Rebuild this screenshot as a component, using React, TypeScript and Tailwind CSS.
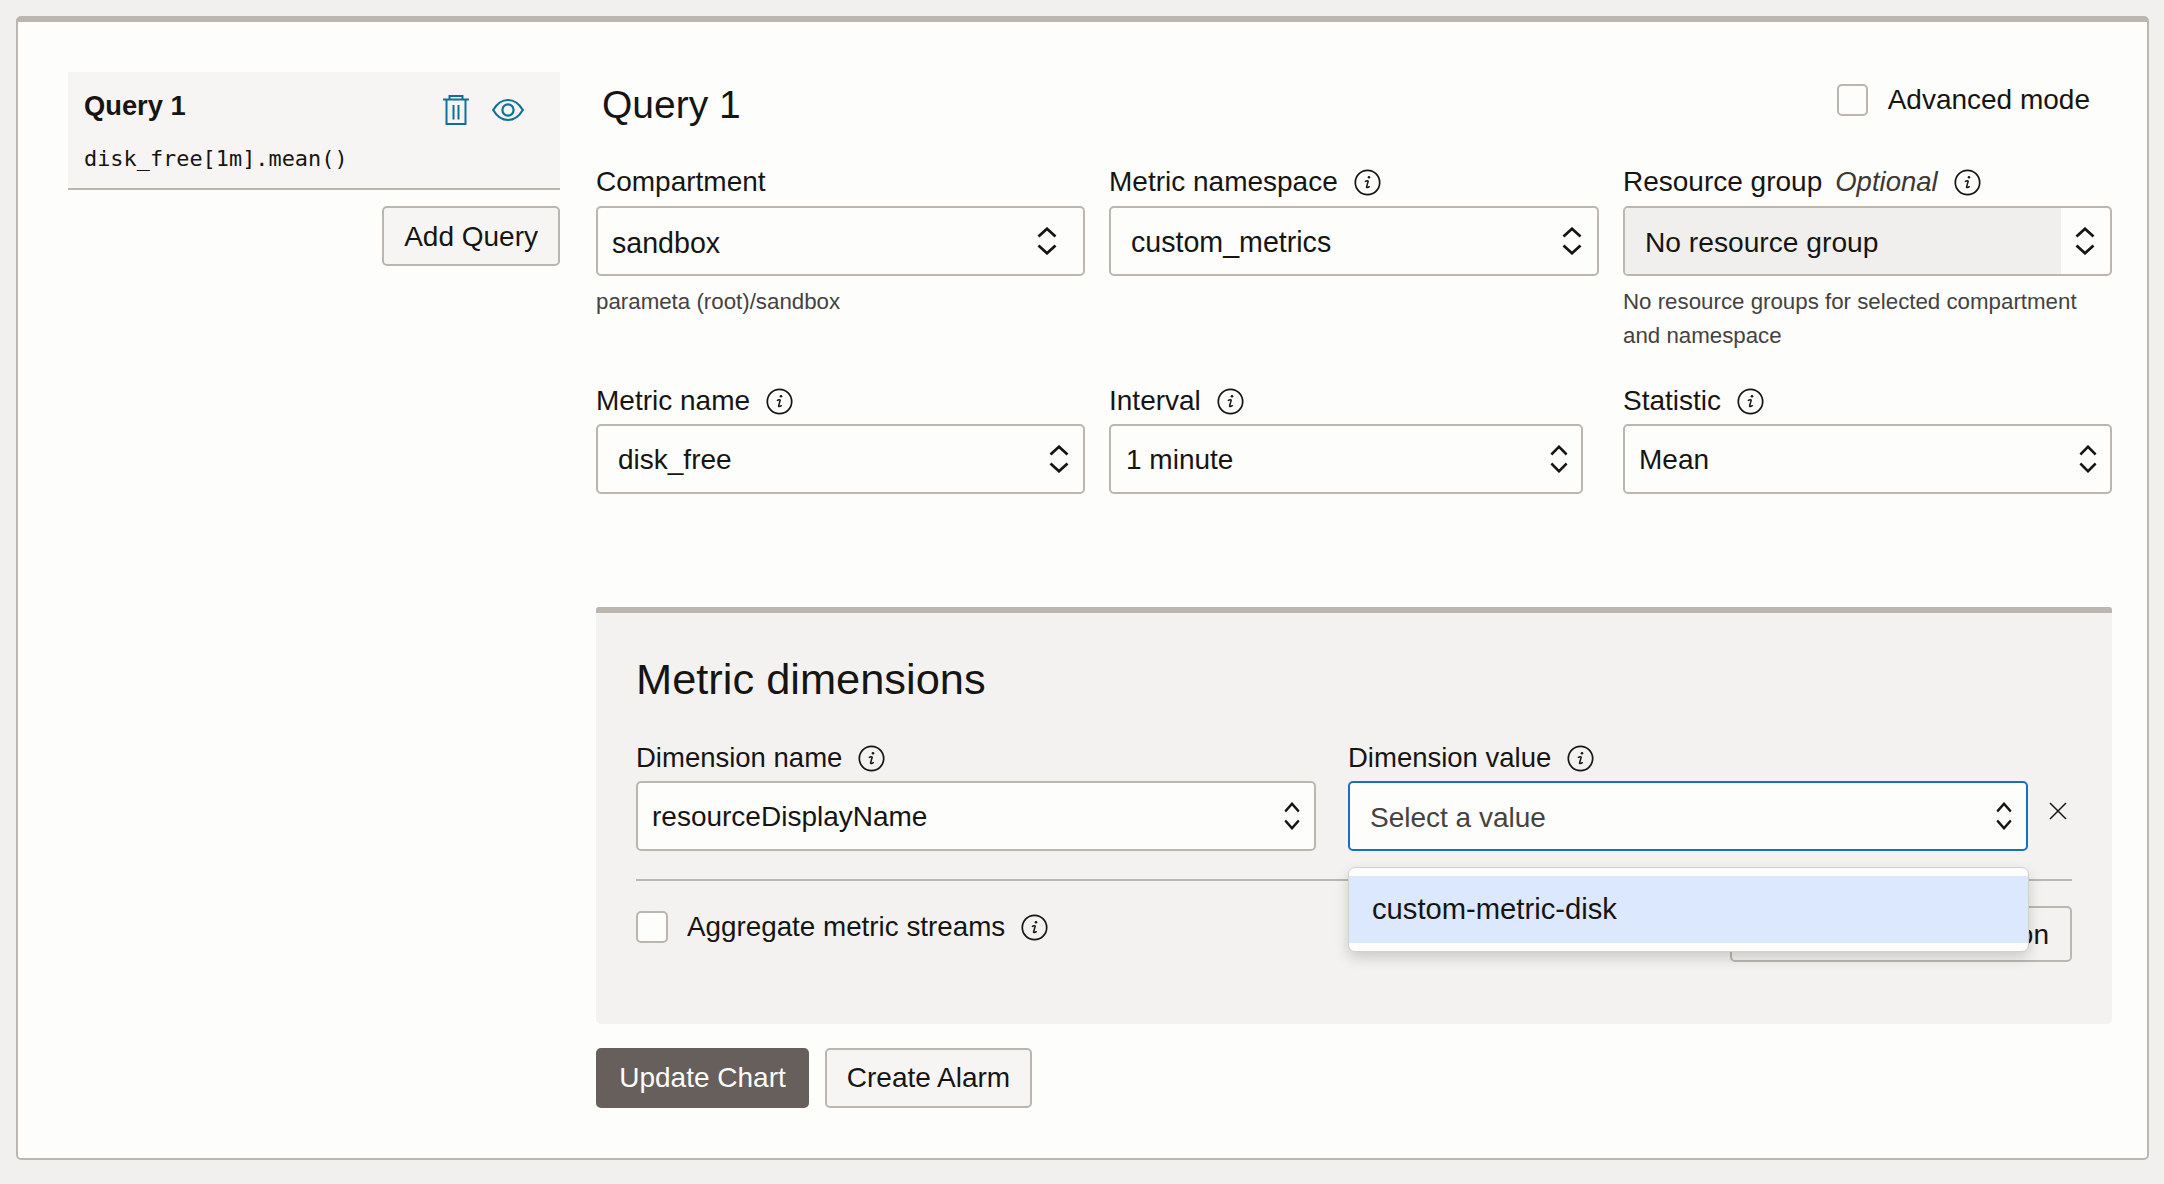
import React from "react"

function InfoIcon() {
    return (
        <svg width="27" height="27" viewBox="0 0 27 27" fill="none" className="shrink-0">
            <circle cx="13.5" cy="13.5" r="12.2" stroke="#161513" strokeWidth="1.7" />
            <circle cx="15" cy="8.2" r="1.3" fill="#161513" />
            <path d="M11.4 12.4c1.200-.8 2.800-1 2.800 0l-1.600 5.300c-.3 1.100 1.100 1.300 2.700 0" stroke="#161513" strokeWidth="1.5" strokeLinecap="round" strokeLinejoin="round" />
        </svg>
    )
}

function Chevrons({ w = 20 }: { w?: number }) {
    return (
        <svg width={w} height="28" viewBox="0 0 20 28" preserveAspectRatio="none" fill="none" className="shrink-0">
            <path d="M1.5 9.5 10 1.8l8.5 7.7" stroke="#161513" strokeWidth="2.8" />
            <path d="M1.5 18.5 10 26.2l8.5-7.7" stroke="#161513" strokeWidth="2.8" />
        </svg>
    )
}

function TrashIcon() {
    return (
        <svg width="26" height="30" viewBox="0 0 26 30" fill="none" className="shrink-0">
            <path d="M0 4.500h26M6.500 4.500V1h13v3.500M3.500 4.500v24.500h19V4.500M10.500 10v14.500M15.500 10v14.500" stroke="#0e7195" strokeWidth="2" />
        </svg>
    )
}

function EyeIcon() {
    return (
        <svg width="32" height="24" viewBox="0 0 32 24" fill="none" className="shrink-0">
            <path d="M1.200 12C5 5.500 10 2 16 2s11 3.500 14.800 10C27 18.500 22 22 16 22S5 18.500 1.200 12Z" stroke="#0e7195" strokeWidth="2.200" />
            <circle cx="16" cy="12" r="5.600" stroke="#0e7195" strokeWidth="2.200" />
        </svg>
    )
}

function CloseIcon() {
    return (
        <svg width="18" height="18" viewBox="0 0 18 18" fill="none" className="shrink-0">
            <path d="M1 1l16 16M17 1 1 17" stroke="#161513" strokeWidth="1.500" />
        </svg>
    )
}

function Checkbox({ className = "" }: { className?: string }) {
    return <div className={`rounded-[5px] border-2 border-[#bcb6b1] bg-[#fdfdfb] shrink-0 ${className}`} />
}

function Label({ text, optional, noInfo, small }: { text: string, optional?: boolean, noInfo?: boolean, small?: boolean }) {
    return (
        <div className={`flex items-center h-[36px] mb-[5px] text-[#161513] ${small ? "text-[27.5px]" : "text-[28px]"}`}>
            <span>{text}</span>
            {optional && <span className="ml-[13px] italic text-[#3b3835] text-[27.5px]">Optional</span>}
            {!noInfo && <span className="ml-[16px]"><InfoIcon /></span>}
        </div>
    )
}

function Select({ value, padLeft, chevronRight, grey, placeholder, focused, chevronW, width, textSize }: {
    value: string, padLeft: string, chevronRight: string, grey?: boolean,
    placeholder?: boolean, focused?: boolean, chevronW?: number, width?: string, textSize?: string
}) {
    return (
        <div className={`flex items-center h-[70px] rounded-[5px] border-2 bg-[#fdfdfb] overflow-hidden ${textSize ?? "text-[28px]"} ${focused ? "border-[#1a6dc4]" : "border-[#bcb6b1]"} ${width ?? "w-full"}`}>
            <div className={`flex-1 flex items-center h-full ${padLeft} ${grey ? "bg-[#f0efed]" : ""} ${placeholder ? "text-[#45423f]" : "text-[#161513]"}`}>
                {value}
            </div>
            <div className={`flex items-center justify-center h-full ${chevronRight}`}>
                <Chevrons w={chevronW} />
            </div>
        </div>
    )
}

function Helper({ children }: { children: React.ReactNode }) {
    return <p className="mt-[9px] text-[22.3px] leading-[34px] text-[#45423f]">{children}</p>
}

export default function App() {
    return (
        <div className="min-h-screen h-[1184px] overflow-hidden bg-[#f1f0ee] pt-[16px] pl-[16px] font-['Liberation_Sans',Arial,sans-serif]">
            <div className="flex w-[2133px] h-[1144px] rounded-[5px] border-x-2 border-b-2 border-t-[6px] border-[#bcb6b1] bg-[#fdfdfb] pl-[50px] pr-[35px] pt-[50px]">

                <div className="w-[492px] shrink-0">
                    <div className="h-[118px] bg-[#f6f5f4] border-b-2 border-[#bcb6b1] pl-[16px] pr-[36px]">
                        <div className="flex items-center justify-between h-[64px] pt-[5px]">
                            <span className="text-[27.3px] font-bold text-[#161513]">Query 1</span>
                            <div className="flex items-center gap-[23px] pt-[6px]">
                                <TrashIcon />
                                <EyeIcon />
                            </div>
                        </div>
                        <div className="font-['DejaVu_Sans_Mono',monospace] text-[21.9px] leading-[30px] mt-[8px] text-[#161513]">disk_free[1m].mean()</div>
                    </div>
                    <div className="flex justify-end mt-[16px]">
                        <button className="h-[60px] px-[20px] pt-[2px] rounded-[5px] border-2 border-[#bcb6b1] bg-[#f6f5f4] text-[28px] text-[#161513]">Add Query</button>
                    </div>
                </div>

                <div className="w-[1516px] ml-[36px]">
                    <div className="flex items-start justify-between h-[92px]">
                        <h1 className="pl-[6px] text-[39px] leading-[66px] text-[#161513]">Query 1</h1>
                        <div className="flex items-center gap-[20px] pr-[22px] pt-[7px] text-[28px] text-[#161513]">
                            <Checkbox className="w-[31px] h-[32px]" />
                            <span>Advanced mode</span>
                        </div>
                    </div>

                    <div className="grid grid-cols-[489px_490px_489px] gap-x-[24px]">
                        <div className="h-[219px]">
                            <Label text="Compartment" noInfo />
                            <div className="pt-[1px]">
                                <Select value="sandbox" padLeft="pl-[14px] pt-[4px]" chevronRight="pr-[26px]" textSize="text-[28.6px]" />
                                <Helper>parameta (root)/sandbox</Helper>
                            </div>
                        </div>
                        <div className="h-[219px]">
                            <Label text="Metric namespace" />
                            <div className="pt-[1px]">
                                <Select value="custom_metrics" padLeft="pl-[20px] pt-[2px]" chevronRight="pr-[15px]" textSize="text-[28.6px]" />
                            </div>
                        </div>
                        <div className="h-[219px]">
                            <Label text="Resource group" optional />
                            <div className="pt-[1px]">
                                <Select value="No resource group" padLeft="pl-[20px] pt-[2px]" chevronRight="pl-[14px] pr-[15px]" grey textSize="text-[28.2px]" />
                                <Helper>No resource groups for selected compartment and namespace</Helper>
                            </div>
                        </div>
                        <div>
                            <Label text="Metric name" />
                            <Select value="disk_free" padLeft="pl-[20px] pt-[2px]" chevronRight="pr-[14px]" />
                        </div>
                        <div>
                            <Label text="Interval" />
                            <Select value="1 minute" padLeft="pl-[15px] pt-[2px]" chevronRight="pr-[13px]" width="w-[474px]" chevronW={18} />
                        </div>
                        <div>
                            <Label text="Statistic" />
                            <Select value="Mean" padLeft="pl-[14px] pt-[2px]" chevronRight="pr-[13px]" chevronW={18} />
                        </div>
                    </div>

                    <section className="mt-[113px] h-[417px] rounded-b-[5px] rounded-t-[3px] border-t-[6px] border-[#bcb6b1] bg-[#f3f2f1] px-[40px] pt-[36px]">
                        <h2 className="text-[43.4px] leading-[60px] text-[#161513]">Metric dimensions</h2>
                        <div className="flex mt-[31px]">
                            <div className="w-[680px]">
                                <Label text="Dimension name" small />
                                <Select value="resourceDisplayName" padLeft="pl-[14px] pt-[1px]" chevronRight="pr-[14px]" chevronW={16} />
                            </div>
                            <div className="w-[680px] ml-[32px] relative">
                                <Label text="Dimension value" small />
                                <Select value="Select a value" padLeft="pl-[20px] pt-[3px]" chevronRight="pr-[14px]" chevronW={16} placeholder focused />
                                <div className="absolute left-0 top-full mt-[16px] w-[681px] h-[85px] z-10 rounded-[7px] border border-[#d3cfcb] bg-[#fdfdfb] py-[8px] shadow-[0_6px_14px_rgba(0,0,0,0.16)]">
                                    <div className="flex items-center h-[67px] pl-[23px] pt-[1px] bg-[#dce8fd] text-[29.2px] text-[#161513]">custom-metric-disk</div>
                                </div>
                            </div>
                            <div className="ml-[21px] mt-[62px]"><CloseIcon /></div>
                        </div>
                        <div className="mt-[28px] border-t-2 border-[#bcb6b1]" />
                        <div className="flex items-start justify-between">
                            <div className="flex items-center mt-[29px] h-[34px] text-[27.8px] text-[#161513]">
                                <Checkbox className="w-[32px] h-[32px]" />
                                <span className="ml-[19px]">Aggregate metric streams</span>
                                <span className="ml-[16px]"><InfoIcon /></span>
                            </div>
                            <button className="mt-[25px] h-[56px] w-[342px] pr-[21px] pt-[2px] text-right rounded-[5px] border-2 border-[#bcb6b1] text-[28px] text-[#161513]">+ Additional dimension</button>
                        </div>
                    </section>

                    <div className="flex gap-[16px] mt-[24px]">
                        <button className="h-[60px] w-[213px] rounded-[5px] bg-[#665f5b] text-[28px] text-[#fdfdfb]">Update Chart</button>
                        <button className="h-[60px] w-[207px] rounded-[5px] border-2 border-[#bcb6b1] bg-[#f6f5f4] text-[28px] text-[#161513]">Create Alarm</button>
                    </div>
                </div>
            </div>
        </div>
    )
}
